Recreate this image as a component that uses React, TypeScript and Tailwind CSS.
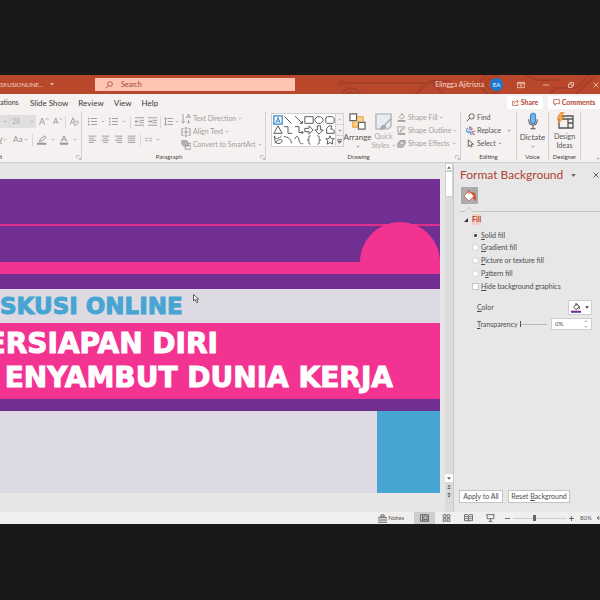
import { useState, type ReactNode } from "react"
import clsx from "clsx"

interface IconProps {
  className?: string
  children?: ReactNode
  box?: string
}

function Icon({ className, children, box = "0 0 12 12" }: IconProps) {
  return (
    <svg viewBox={box} className={clsx("shrink-0", className)} fill="none" stroke="currentColor" strokeWidth="1.2" aria-hidden="true">
      {children}
    </svg>
  )
}

function Caret({ className = "text-[#a5a3a2]" }: { className?: string }) {
  return (
    <Icon box="0 0 6 4" className={clsx("w-1 h-[3px]", className)}>
      <path d="M1 1l2 2 2-2" />
    </Icon>
  )
}

function Launcher() {
  return (
    <button aria-label="More options" className="text-[#9a9897]">
      <Icon className="size-[5px]"><path d="M1 9V1h8M5 5l6 6M11 6v5H6" /></Icon>
    </button>
  )
}

function Divider() {
  return <span className="block w-px h-3 bg-[#dad8d7]" />
}

// Lines of text, each given by its start and end
function Lines({ rows }: { rows: number[][] }) {
  return <>{rows.map(([a, b], i) => <path key={i} d={`M${a} ${1.5 + i * 2.8}H${b}`} />)}</>
}

const aligns = [
  { name: "Align left", rows: [[1, 11], [1, 8], [1, 11], [1, 8]] },
  { name: "Center", rows: [[1, 11], [3, 9], [1, 11], [3, 9]] },
  { name: "Align right", rows: [[1, 11], [4, 11], [1, 11], [4, 11]] },
  { name: "Justify", rows: [[1, 11], [1, 11], [1, 11], [1, 11]] },
]

interface GroupProps {
  label: ReactNode
  className: string
  inner?: string
  launcher?: boolean
  children: ReactNode
}

function Group({ label, className, inner, launcher, children }: GroupProps) {
  return (
    <section className={clsx("flex flex-col shrink-0 border-r border-[#d3d1d0] h-12", className)}>
      <div className={clsx("flex h-[42px]", inner)}>{children}</div>
      <div className="flex items-center h-1.5 text-[6px] leading-[6px] text-[#444]">
        <span className={clsx("flex-1 text-center", launcher && "pr-1")}>{label}</span>
        {launcher && <Launcher />}
      </div>
    </section>
  )
}

function TitleBar() {
  return (
    <header className="relative flex items-center h-[19px] bg-[#b9472b] text-[#f6d5ca] text-[7px] overflow-hidden">
      <svg viewBox="0 0 270 19" className="absolute right-0 top-0 w-[270px] h-[19px]" fill="none" stroke="#a5412a" strokeWidth="2" aria-hidden="true">
        <circle cx="11" cy="8" r="2" />
        <path d="M13 8h90l10 11M86 19l14-13h20" />
        <circle cx="21" cy="22" r="9" />
        <circle cx="21" cy="22" r="5" />
        <circle cx="161" cy="9" r="10" />
        <circle cx="161" cy="9" r="5" />
        <path d="M220 19l6-6h20l13-13M246 19l20-19M196 0l10 5h24" />
      </svg>
      <span className="w-[42px] shrink-0 text-right text-[6px] whitespace-nowrap">SKUSIONLINE...</span>
      <button aria-label="File menu" className="ml-2 w-1 shrink-0"><Icon box="0 0 6 4" className="w-1 h-[3px]"><path d="M0 0h6L3 3z" fill="currentColor" stroke="none" /></Icon></button>
      <label className="relative flex items-center gap-2 h-[13px] w-[200px] ml-[41px] px-2.5 bg-[#fdc4b1] text-[#a6452d]">
        <Icon className="size-2"><circle cx="7.5" cy="4.500" r="3.500" /><path d="M5 7l-4 4" /></Icon>
        <input type="search" placeholder="Search" aria-label="Search" className="w-full h-[13px] leading-[13px] bg-transparent outline-none placeholder:text-[#a6452d]" />
      </label>
      <div className="relative flex items-center ml-auto shrink-0">
        <span>Elingga Ajitrisna</span>
        <button className="ml-1.5 size-[13px] rounded-full bg-[#1878d2] text-white text-[6px] leading-[13px]">EA</button>
        <button aria-label="Ribbon display" className="ml-3.5"><Icon className="size-2"><path d="M.5 2h11v8H.5zM.5 4h11M6 9V5.500M4.500 7L6 5.500 7.500 7" /></Icon></button>
        <button aria-label="Minimize" className="ml-[18px]"><Icon className="w-1.5 h-2"><path d="M0 6h12" strokeWidth="1.500" /></Icon></button>
        <button aria-label="Restore" className="ml-[19px]"><Icon className="size-1.5"><path d="M1 4h7v7H1zM4 4V1h7v7H8" strokeWidth="1.500" /></Icon></button>
        <button aria-label="Close" className="ml-[19px] mr-px"><Icon className="size-1.5"><path d="M1 1l10 10M11 1L1 11" strokeWidth="1.500" /></Icon></button>
      </div>
    </header>
  )
}

function Tabs() {
  return (
    <nav className="flex items-center h-[17px] text-[8px] text-[#3c3b3b]">
      <button className="w-[18px] shrink-0 text-right text-[7px]">ations</button>
      <button className="ml-3">Slide Show</button>
      <button className="ml-2.5">Review</button>
      <button className="ml-2.5">View</button>
      <button className="ml-2.5">Help</button>
      <div className="flex gap-[5px] ml-auto text-[7px] text-[#b04530] font-bold">
        <button className="flex items-center justify-center gap-0.5 w-9 h-[13px] bg-white rounded-xs">
          <Icon className="size-[7px]"><path d="M4 4H1v7h9V8M4 8c0-3 2-4 6-4M8 1l3 3-3 3" /></Icon>Share
        </button>
        <button className="flex items-center justify-center gap-0.5 w-[52px] h-[13px] bg-white rounded-xs">
          <Icon className="size-[7px]"><path d="M1 1h10v7H5l-2 3V8H1z" /></Icon>Comments
        </button>
      </div>
    </nav>
  )
}

function FontGroup() {
  return (
    <Group label={<span className="block text-left">t</span>} className="w-[82px]" launcher>
      <div className="flex flex-col flex-1 gap-[5px] pt-[3px] text-[#9a9897] text-[9px] leading-[13px]">
        <div className="flex items-center h-[13px]">
          <span className="flex items-center justify-end w-2.5 h-[13px] pr-0.5 bg-[#e0dfde] border-r border-[#d6d4d3]"><Caret /></span>
          <button className="flex items-center justify-between w-[26px] h-[13px] px-0.5 bg-[#e0dfde] text-[7px] text-[#b0aeac]">28 <Caret /></button>
          <button className="ml-[3px] flex">A<Icon box="0 0 6 4" className="w-1 h-1 mt-0.5"><path d="M1 3l2-2 2 2" /></Icon></button>
          <button className="ml-1 flex text-[8px]">A<Icon box="0 0 6 4" className="w-1 h-1 mt-0.5"><path d="M1 1l2 2 2-2" /></Icon></button>
          <span className="ml-0.5 mr-1"><Divider /></span>
          <button aria-label="Clear formatting"><Icon className="size-[9px]"><path d="M0 10L4 1l3 6M1.500 7h4" /><path d="M5 9l4-4 3 2-4 4H6z" /></Icon></button>
        </div>
        <div className="flex items-center h-[13px]">
          <Icon box="0 0 3 12" className="w-[3px] h-2.5"><path d="M0 9l2-6M0 10h2" /></Icon>
          <Caret />
          <button className="ml-1.5 flex items-center gap-0.5 text-[8px]">Aa<Caret /></button>
          <span className="mx-1"><Divider /></span>
          <button aria-label="Highlight" className="flex items-center gap-1"><Icon className="size-2.5"><path d="M3 8l1-3 5-4 2 2-5 4z" /><path d="M0 10.500h11" strokeWidth="2.500" /></Icon><Caret /></button>
          <button aria-label="Font color" className="ml-1 flex items-center gap-1"><Icon className="size-2.5"><path d="M2.500 8L6 1l3.500 7M4 5.500h4" /><path d="M1 10.500h10" strokeWidth="2.500" /></Icon><Caret /></button>
        </div>
      </div>
    </Group>
  )
}

function ParagraphGroup() {
  return (
    <Group label="Paragraph" className="w-[184px]" inner="pl-1" launcher>
      <div className="flex flex-col gap-[5px] w-[95px] pt-[3px] pl-0.5 text-[#9a9897]">
        <div className="flex items-center h-[13px]">
          {["Bullets", "Numbering"].map((name) => (
            <button key={name} aria-label={name} className="flex items-center gap-1 mr-1">
              <Icon className="size-[9px]"><path d="M4 2h8M4 6h8M4 10h8" /><path d="M0 2h2M0 6h2M0 10h2" strokeWidth="1.800" /></Icon><Caret />
            </button>
          ))}
          <span className="mr-1"><Divider /></span>
          <button aria-label="Decrease indent" className="mr-1"><Icon className="size-[9px]"><path d="M0 1h12M6 4.500h6M6 7.500h6M0 11h12M5 6H0M2 4L0 6l2 2" /></Icon></button>
          <button aria-label="Increase indent"><Icon className="size-[9px]"><path d="M0 1h12M6 4.500h6M6 7.500h6M0 11h12M0 6h5M3 4l2 2-2 2" /></Icon></button>
          <span className="mx-[3px]"><Divider /></span>
          <button aria-label="Line spacing" className="flex items-center gap-0.5"><Icon className="size-[9px]"><path d="M5 2h7M5 6h7M5 10h7M2 1v10M0 3l2-2 2 2M0 9l2 2 2-2" /></Icon><Caret /></button>
        </div>
        <div className="flex items-center h-[13px]">
          {aligns.map((a) => (
            <button key={a.name} aria-label={a.name} className="mr-1"><Icon className="size-[9px]"><Lines rows={a.rows} /></Icon></button>
          ))}
          <span className="mr-1"><Divider /></span>
          <button aria-label="Columns" className="flex items-center gap-1"><Icon className="w-[7px] h-[9px]"><path d="M0 4h5M7 4h5M0 8h5M7 8h5" /></Icon><Caret /></button>
        </div>
      </div>
      <div className="flex flex-col gap-0.5 pt-px text-[7px] leading-[11px] text-[#a19f9e] whitespace-nowrap">
        <button className="flex items-center gap-0.5"><Icon className="size-2.5"><path d="M2.500 0v11M.5 9l2 2 2-2M6.500 5l2.500-5 2.500 5M7.500 3.500h3M9 11V7M7.500 9.500L9 11l1.500-1.500" /></Icon>Text Direction <Caret /></button>
        <button className="flex items-center gap-0.5"><Icon className="size-2.5"><path d="M3 2H1v8h2M9 2h2v8H9M6 0v12M3 6h6M4.500 2L6 .5 7.500 2M4.500 10L6 11.500 7.500 10" /></Icon>Align Text <Caret /></button>
        <button className="flex items-center gap-0.5"><Icon className="size-2.5"><path d="M1 1h6l2 3v3H3L1 5z" fill="#b5b3b2" /><path d="M5 7h7v4H5zM8 4h4v3" /></Icon>Convert to SmartArt <Caret /></button>
      </div>
    </Group>
  )
}

const shapes = [
  "M2 2l8 8", "M1 1l9 9M10 7v3H7", "M1 2h10v8H1z", "M4 2h4l3 3v2L8 10H4L1 7V5z", "M3 2h6l2 2v5l-1 1H2l-1-1V3z",
  "M6 1l5 9H1z", "M1 2h5v8h5", "M1 2h5v7h5M9 7l2 2-2 2", "M1 4h5V1l5 5-5 5V8H1z", "M4 1h4v5h3l-5 5-5-5h3z", "M2 10V4l3-3h3L7 5h2l2 2v3z",
  "M2 1c-2 6 8 2 8 0M2 1c0 5 0 8 3 9s6-1 6-3-4-3-9 3", "M1 2c5 0 9 3 9 8", "M1 5c2-5 4-4 5 1s3 5 5 4", "M8 1c-3 0-2 1-2 3S5 6 4 6c1 0 2 0 2 2s-1 3 2 3", "M4 1c3 0 2 1 2 3s1 2 2 2c-1 0-2 0-2 2s1 3-2 3", "M6 1l1.500 3.500H11L8.500 7l1 4L6 9l-3.500 2 1-4L1 4.500h3.500z",
]

function DrawingGroup() {
  return (
    <Group label="Drawing" className="w-[195px]" inner="pl-[5px]" launcher>
      <div className="flex w-[73px] h-[34px] mt-px shrink-0 border border-[#d3d1d0] bg-white">
        <div className="grid grid-cols-6 content-between w-[63px] py-px pl-px text-[#5d5c5c]">
          <button aria-label="Text box"><Icon className="size-2.5 text-[#3386c7]"><path d="M1 1h10v10H1z" strokeWidth="1.500" /><path d="M3.500 9.500L6 3l2.500 6.500M4.500 7.500h3" /></Icon></button>
          {shapes.map((d) => (
            <button key={d} aria-label="Shape"><Icon className="size-2.5"><path d={d} /></Icon></button>
          ))}
        </div>
        <div className="flex flex-col flex-1 border-l border-[#d3d1d0] divide-y divide-[#d3d1d0] bg-[#f3f1f0] text-[#666]">
          <button aria-label="Scroll up" className="flex-1 flex items-center justify-center"><Icon box="0 0 6 4" className="w-1 h-[3px] text-[#b5b3b2]"><path d="M1 3l2-2 2 2" /></Icon></button>
          <button aria-label="Scroll down" className="flex-1 flex items-center justify-center"><Caret className="text-[#666]" /></button>
          <button aria-label="More shapes" className="flex-1 flex items-center justify-center"><Icon box="0 0 6 6" className="size-[5px]"><path d="M0 1h6M1 3h4L3 5z" /></Icon></button>
        </div>
      </div>
      <button className="flex flex-col items-center w-[27px] shrink-0 pt-px text-[8px] leading-2 text-[#555]">
        <Icon box="0 0 18 18" className="size-[17px] mb-[3px]"><path d="M4 4h11v11H4z" fill="#fbd18b" stroke="#f0a33c" /><path d="M1 1h7v7H1zM10 10h7v7h-7z" fill="#fff" stroke="#666" strokeWidth="1.300" /></Icon>
        Arrange
        <span className="mt-1 flex"><Caret className="text-[#777]" /></span>
      </button>
      <button className="flex flex-col items-center w-[25px] shrink-0 pt-px text-[7px] leading-[9px] text-[#aaa8a7] whitespace-nowrap">
        <Icon box="0 0 18 18" className="size-[17px] mb-0.5"><path d="M1 1h16v13l-3 3H1z" fill="#e8edf4" /><path d="M17 6l-7 7M6 17c1-4 4-5 5-3s-2 3-5 3z" fill="#aaa" strokeWidth="1.500" /></Icon>
        <span>Quick</span>
        <span className="flex items-center gap-0.5">Styles <Caret /></span>
      </button>
      <div className="flex flex-col gap-0.5 pl-px text-[7px] leading-[11px] text-[#a19f9e] whitespace-nowrap">
        <button className="flex items-center gap-0.5"><Icon className="size-[9px]"><path d="M3 5l4-4 3 4-4 3zM6 0v3" /><path d="M1 10.500h10" strokeWidth="2.500" /></Icon>Shape Fill <Caret /></button>
        <button className="flex items-center gap-0.5"><Icon className="size-[9px]"><path d="M9 1H1v7h2M4 8l1-3 5-4 1 1-5 5z" /><path d="M1 10.500h10" strokeWidth="2.500" /></Icon>Shape Outline <Caret /></button>
        <button className="flex items-center gap-0.5"><Icon className="size-[9px]"><path d="M1 6l3-4h7v4l-3 5H1z" fill="#bbb" /><path d="M3 7l2-3h5L8 7z" fill="#fff" /></Icon>Shape Effects <Caret /></button>
      </div>
    </Group>
  )
}

function Ribbon() {
  return (
    <div className="flex h-[51px] pt-px">
      <FontGroup />
      <ParagraphGroup />
      <DrawingGroup />
      <Group label="Editing" className="w-[56px]" inner="pl-[5px]">
        <div className="flex flex-col gap-0.5 text-[7px] leading-[11px] text-[#555] whitespace-nowrap">
          <button className="flex items-center gap-0.5"><Icon className="size-[9px]"><circle cx="7.500" cy="4.500" r="3.500" /><path d="M5 7l-4 4" /></Icon>Find</button>
          <button className="flex items-center gap-0.5"><Icon className="size-[9px]"><path d="M5 0v5M5 2.500h3V5H5M12 7H9v4h3" stroke="#a0559d" /><path d="M3 3H1v5h3M3 6l2 2-2 2M8 8H6v3h2" stroke="#4187c5" /></Icon>Replace <span className="ml-1"><Caret className="text-[#777]" /></span></button>
          <button className="flex items-center gap-0.5"><Icon className="size-[9px]"><path d="M3 1v9l2-2 2 3 1-1-1-3h3z" /></Icon>Select <Caret className="text-[#777]" /></button>
        </div>
      </Group>
      <Group label="Voice" className="w-8">
        <button className="flex flex-col items-center w-full text-[8px] leading-2 text-[#555]">
          <Icon box="0 0 14 20" className="w-3 h-[18px] mb-[3px]"><rect x="4" y="1" width="6" height="12" rx="3" fill="#75b5e8" stroke="#3d86c6" /><path d="M2 8c0 9 10 9 10 0M7 15v4M4 19h6" /></Icon>
          Dictate
          <span className="mt-1 flex"><Caret className="text-[#777]" /></span>
        </button>
      </Group>
      <Group label="Designer" className="w-8">
        <button className="flex flex-col items-center w-full text-[7px] leading-[9px] text-[#555]">
          <Icon box="0 0 18 18" className="size-[18px] mb-0.5"><path d="M3 4h14v12H3zM3 7h14M12 7v9M12 11h5" strokeWidth="1.300" /><path d="M5 0L1 7h3l-2 5 6-7H5l3-5z" fill="#f9b14d" stroke="#e8842b" strokeWidth=".8" /></Icon>
          <span>Design</span>
          <span>Ideas</span>
        </button>
      </Group>
      <div className="flex flex-1 items-end justify-end pb-0.5 text-[#777]">
        <button aria-label="Collapse ribbon"><Icon box="0 0 6 4" className="w-1 h-[3px]"><path d="M1 3l2-2 2 2" /></Icon></button>
      </div>
    </div>
  )
}

function Slide() {
  return (
    <main className="flex-1 min-w-0 pt-4 pr-[5px] pb-[19px] bg-[#e6e6e7]">
      <div className="relative font-['DejaVu_Sans',sans-serif] font-bold whitespace-nowrap">
        <div className="h-[45px] bg-[#722f92]" />
        <div className="h-0.5 bg-[#e0308f]" />
        <div className="h-9 bg-[#722f92]" />
        <div className="h-3 bg-[#f33392]" />
        <div className="h-[15px] bg-[#722f92]" />
        <div className="absolute right-0 top-[43px] w-20 h-10 rounded-t-full bg-[#f33392]" />
        <h1 className="h-[34px] bg-[#dddae3] text-[#46a5d2] text-[23px] leading-[34px] [-webkit-text-stroke:1px_#46a5d2]">SKUSI ONLINE</h1>
        <div className="h-[76px] pt-1 bg-[#f33392] text-white text-[28px] leading-[34px] [-webkit-text-stroke:1px_white]">
          <p className="flex justify-end w-[218px]">ERSIAPAN DIRI</p>
          <p className="flex justify-end w-[393px]">ENYAMBUT DUNIA KERJA</p>
        </div>
        <div className="h-3 bg-[#722f92]" />
        <div className="flex justify-end h-[82px] bg-[#dddae3]">
          <div className="w-[63px] bg-[#46a5d2]" />
        </div>
      </div>
    </main>
  )
}

function ScrollBar() {
  return (
    <div className="flex flex-col items-center w-2 shrink-0 bg-[#dcdbdc] text-[#666]">
      <button aria-label="Up" className="flex items-center justify-center w-2 h-2 border border-[#cfcfcf] bg-white"><Icon box="0 0 6 4" className="w-1 h-[3px]"><path d="M0 4h6L3 0z" fill="currentColor" stroke="none" /></Icon></button>
      <div className="w-2 h-[26px] bg-white border border-[#cfcfcf]" />
      <div className="flex-1" />
      <button aria-label="Down" className="flex items-center justify-center w-2 h-2 bg-white"><Icon box="0 0 6 4" className="w-1 h-[3px]"><path d="M0 0h6L3 4z" fill="currentColor" stroke="none" /></Icon></button>
      <button aria-label="Previous slide" className="flex items-center w-2 h-[9px] justify-center"><Icon box="0 0 6 8" className="w-1 h-[5px]"><path d="M0 4l3-3 3 3zM0 8l3-3 3 3z" fill="currentColor" stroke="none" /></Icon></button>
      <button aria-label="Next slide" className="flex items-center w-2 h-[9px] justify-center mb-3"><Icon box="0 0 6 8" className="w-1 h-[5px]"><path d="M0 0l3 3 3-3zM0 4l3 3 3-3z" fill="currentColor" stroke="none" /></Icon></button>
    </div>
  )
}

const fills = [
  { id: "solid", label: <><u>S</u>olid fill</> },
  { id: "gradient", label: <><u>G</u>radient fill</> },
  { id: "picture", label: <><u>P</u>icture or texture fill</> },
  { id: "pattern", label: <>P<u>a</u>ttern fill</> },
]

function FormatPanel() {
  const [fill, setFill] = useState("solid")
  return (
    <aside className="flex flex-col w-[147px] shrink-0 border-l border-[#c9c8c9] bg-[#e7e7e8] text-[7px] text-[#4c4b4b]">
      <div className="flex items-center h-6 pl-1.5 pr-px">
        <h2 className="flex-1 text-[12px] text-[#b04332] whitespace-nowrap">Format Background</h2>
        <button aria-label="Pane options" className="mr-[17px] text-[#666]"><Icon box="0 0 6 4" className="w-[5px] h-[3px]"><path d="M0 0h6L3 4z" fill="currentColor" stroke="none" /></Icon></button>
        <button aria-label="Close pane" className="text-[#666]"><Icon className="size-1.5"><path d="M1 1l10 10M11 1L1 11" strokeWidth="2" /></Icon></button>
      </div>
      <button aria-label="Fill options" className="flex items-center justify-center size-[17px] ml-[7px] bg-[#acabab]">
        <Icon className="size-3"><path d="M7 2c5 0 5 3 5 9-3-1-3-5-5-6" fill="#d6512d" stroke="none" /><path d="M0 6l5-5 5 5-5 5z" fill="#fff" stroke="#d6512d" strokeWidth=".7" /><path d="M5 0v4" stroke="#d6512d" /></Icon>
      </button>
      <svg viewBox="0 0 140 8" className="w-[140px] h-2 ml-1.5 text-[#c6c5c6]" fill="none" stroke="currentColor" aria-hidden="true">
        <path d="M0 7.500h5l4-4 4 4h127" />
      </svg>
      <button className="flex items-center gap-1 h-[15px] pl-2.5 text-[#b84432] font-bold">
        <Icon box="0 0 6 6" className="size-1 text-[#333]"><path d="M6 0v6H0z" fill="currentColor" stroke="none" /></Icon><span className="bg-[#f3cfc8]">Fill</span>
      </button>
      <div className="flex flex-col pl-[18px] pt-0.5">
        {fills.map((f) => (
          <label key={f.id} className="flex items-center gap-0.5 h-[13px] first:h-3">
            <input type="radio" name="fill" checked={fill === f.id} onChange={() => setFill(f.id)} className="appearance-none size-[7px] rounded-full bg-white border border-[#d0d0d0] checked:bg-[radial-gradient(#333_1px,#fff_2px)]" />
            <span>{f.label}</span>
          </label>
        ))}
        <label className="flex items-center gap-0.5 h-[13px]">
          <input type="checkbox" className="appearance-none size-[7px] bg-white border border-[#c6c6c6] checked:bg-[#444]" />
          <span><u>H</u>ide background graphics</span>
        </label>
      </div>
      <div className="flex items-center justify-between h-[15px] mt-[7px] pl-[23px] pr-2">
        <span><u>C</u>olor</span>
        <button aria-label="Color" className="flex items-center justify-center gap-1 w-6 h-[15px] border border-[#cfcfcf] bg-white">
          <Icon className="size-2.5"><path d="M3 5l4-4 3 4-4 3zM6 0v3M10 4v3" /><path d="M0 10.500h12" stroke="#722f92" strokeWidth="2.500" /></Icon>
          <Icon box="0 0 6 4" className="w-1 h-[3px]"><path d="M0 0h6L3 4z" fill="currentColor" stroke="none" /></Icon>
        </button>
      </div>
      <div className="flex items-center h-3 mt-[3px] pl-[23px] pr-2">
        <label htmlFor="transparency" className="w-[43px]"><u>T</u>ransparency</label>
        <input type="range" aria-label="Transparency slider" defaultValue={0} className="appearance-none w-[27px] h-[7px] bg-[linear-gradient(#b9b8b9,#b9b8b9)] bg-size-[100%_1px] bg-center bg-no-repeat [&::-webkit-slider-thumb]:appearance-none [&::-webkit-slider-thumb]:w-px [&::-webkit-slider-thumb]:h-1.5 [&::-webkit-slider-thumb]:bg-[#555]" />
        <div className="flex items-center w-[41px] h-3 ml-auto px-[3px] border border-[#cfcfcf] bg-white">
          <input id="transparency" defaultValue="0%" className="w-full min-w-0 text-[6px] leading-2 outline-none" />
          <Icon box="0 0 6 12" className="w-1 h-2 text-[#888]"><path d="M1 3l2-2 2 2M1 9l2 2 2-2" /></Icon>
        </div>
      </div>
      <div className="flex gap-[5px] mt-auto mb-[9px] pl-[5px] whitespace-nowrap">
        <button className="w-11 h-[13px] border border-[#c3c3c3] bg-white">App<u>l</u>y to All</button>
        <button className="w-[62px] h-[13px] border border-[#c3c3c3] bg-white">Reset <u>B</u>ackground</button>
      </div>
    </aside>
  )
}

function StatusBar() {
  return (
    <footer className="flex items-center justify-end h-3 bg-[#f1efee] text-[7px] leading-3 text-[#555]">
      <button className="flex items-center gap-px mr-2.5"><Icon className="size-[9px]"><path d="M0 5h12M0 8h12M0 11h12M3 3l3-3 3 3z" /></Icon><span className="text-[6px]">Notes</span></button>
      <button aria-label="Normal view" className="flex items-center justify-center w-[21px] h-3 bg-[#cfcdcc]"><Icon className="w-[9px] h-2"><path d="M0 1h12v10H0zM3 1v10M5 3h5v5H5zM3 9h9" /></Icon></button>
      <button aria-label="Slide sorter" className="ml-[7px]"><Icon className="w-[9px] h-2"><path d="M1 1h4v4H1zM7 1h4v4H7zM1 7h4v4H1zM7 7h4v4H7z" /></Icon></button>
      <button aria-label="Reading view" className="ml-[13px]"><Icon className="w-[9px] h-2"><path d="M0 1h5l1 1 1-1h5v9H7l-1 1-1-1H0zM6 2v9M1 4h4M1 7h4M7 4h4M7 7h4" /></Icon></button>
      <button aria-label="Slide show" className="ml-[13px]"><Icon className="w-[9px] h-2"><path d="M0 1h12M1 1v6h10V1M6 7v4M3 11h6" /></Icon></button>
      <button aria-label="Zoom out" className="ml-2.5"><Icon className="size-[5px]"><path d="M0 6h12" strokeWidth="2" /></Icon></button>
      <input type="range" aria-label="Zoom" defaultValue={40} className="appearance-none w-[53px] h-2 mx-[3px] bg-[linear-gradient(#cfcdcc,#cfcdcc)] bg-size-[100%_1px] bg-center bg-no-repeat [&::-webkit-slider-thumb]:appearance-none [&::-webkit-slider-thumb]:w-[3px] [&::-webkit-slider-thumb]:h-1.5 [&::-webkit-slider-thumb]:bg-[#666]" />
      <button aria-label="Zoom in"><Icon className="size-[5px]"><path d="M0 6h12M6 0v12" strokeWidth="2" /></Icon></button>
      <span className="ml-1.5 w-[17px] text-[6px]">80%</span>
      <button aria-label="Fit to window"><Icon box="0 0 4 12" className="w-[3px] h-2"><path d="M4 6H0M3 3L0 6l3 3" /></Icon></button>
    </footer>
  )
}

export default function App() {
  return (
    <div className="min-h-screen py-[75px] bg-[#191919] font-[Lato,sans-serif] overflow-hidden">
      <div className="relative flex flex-col">
        <TitleBar />
        <div className="bg-[#f4f1f0] border-b border-[#d0cecd]">
          <Tabs />
          <Ribbon />
        </div>
        <div className="flex">
          <Slide />
          <ScrollBar />
          <FormatPanel />
        </div>
        <StatusBar />
        <svg viewBox="0 0 12 18" className="absolute left-[193px] top-[219px] w-1.5 h-[9px]" aria-hidden="true">
          <path d="M1 1v13l3-3 3 6 3-1-3-6h4z" fill="#fff" stroke="#333" strokeWidth="1.500" />
        </svg>
      </div>
    </div>
  )
}
